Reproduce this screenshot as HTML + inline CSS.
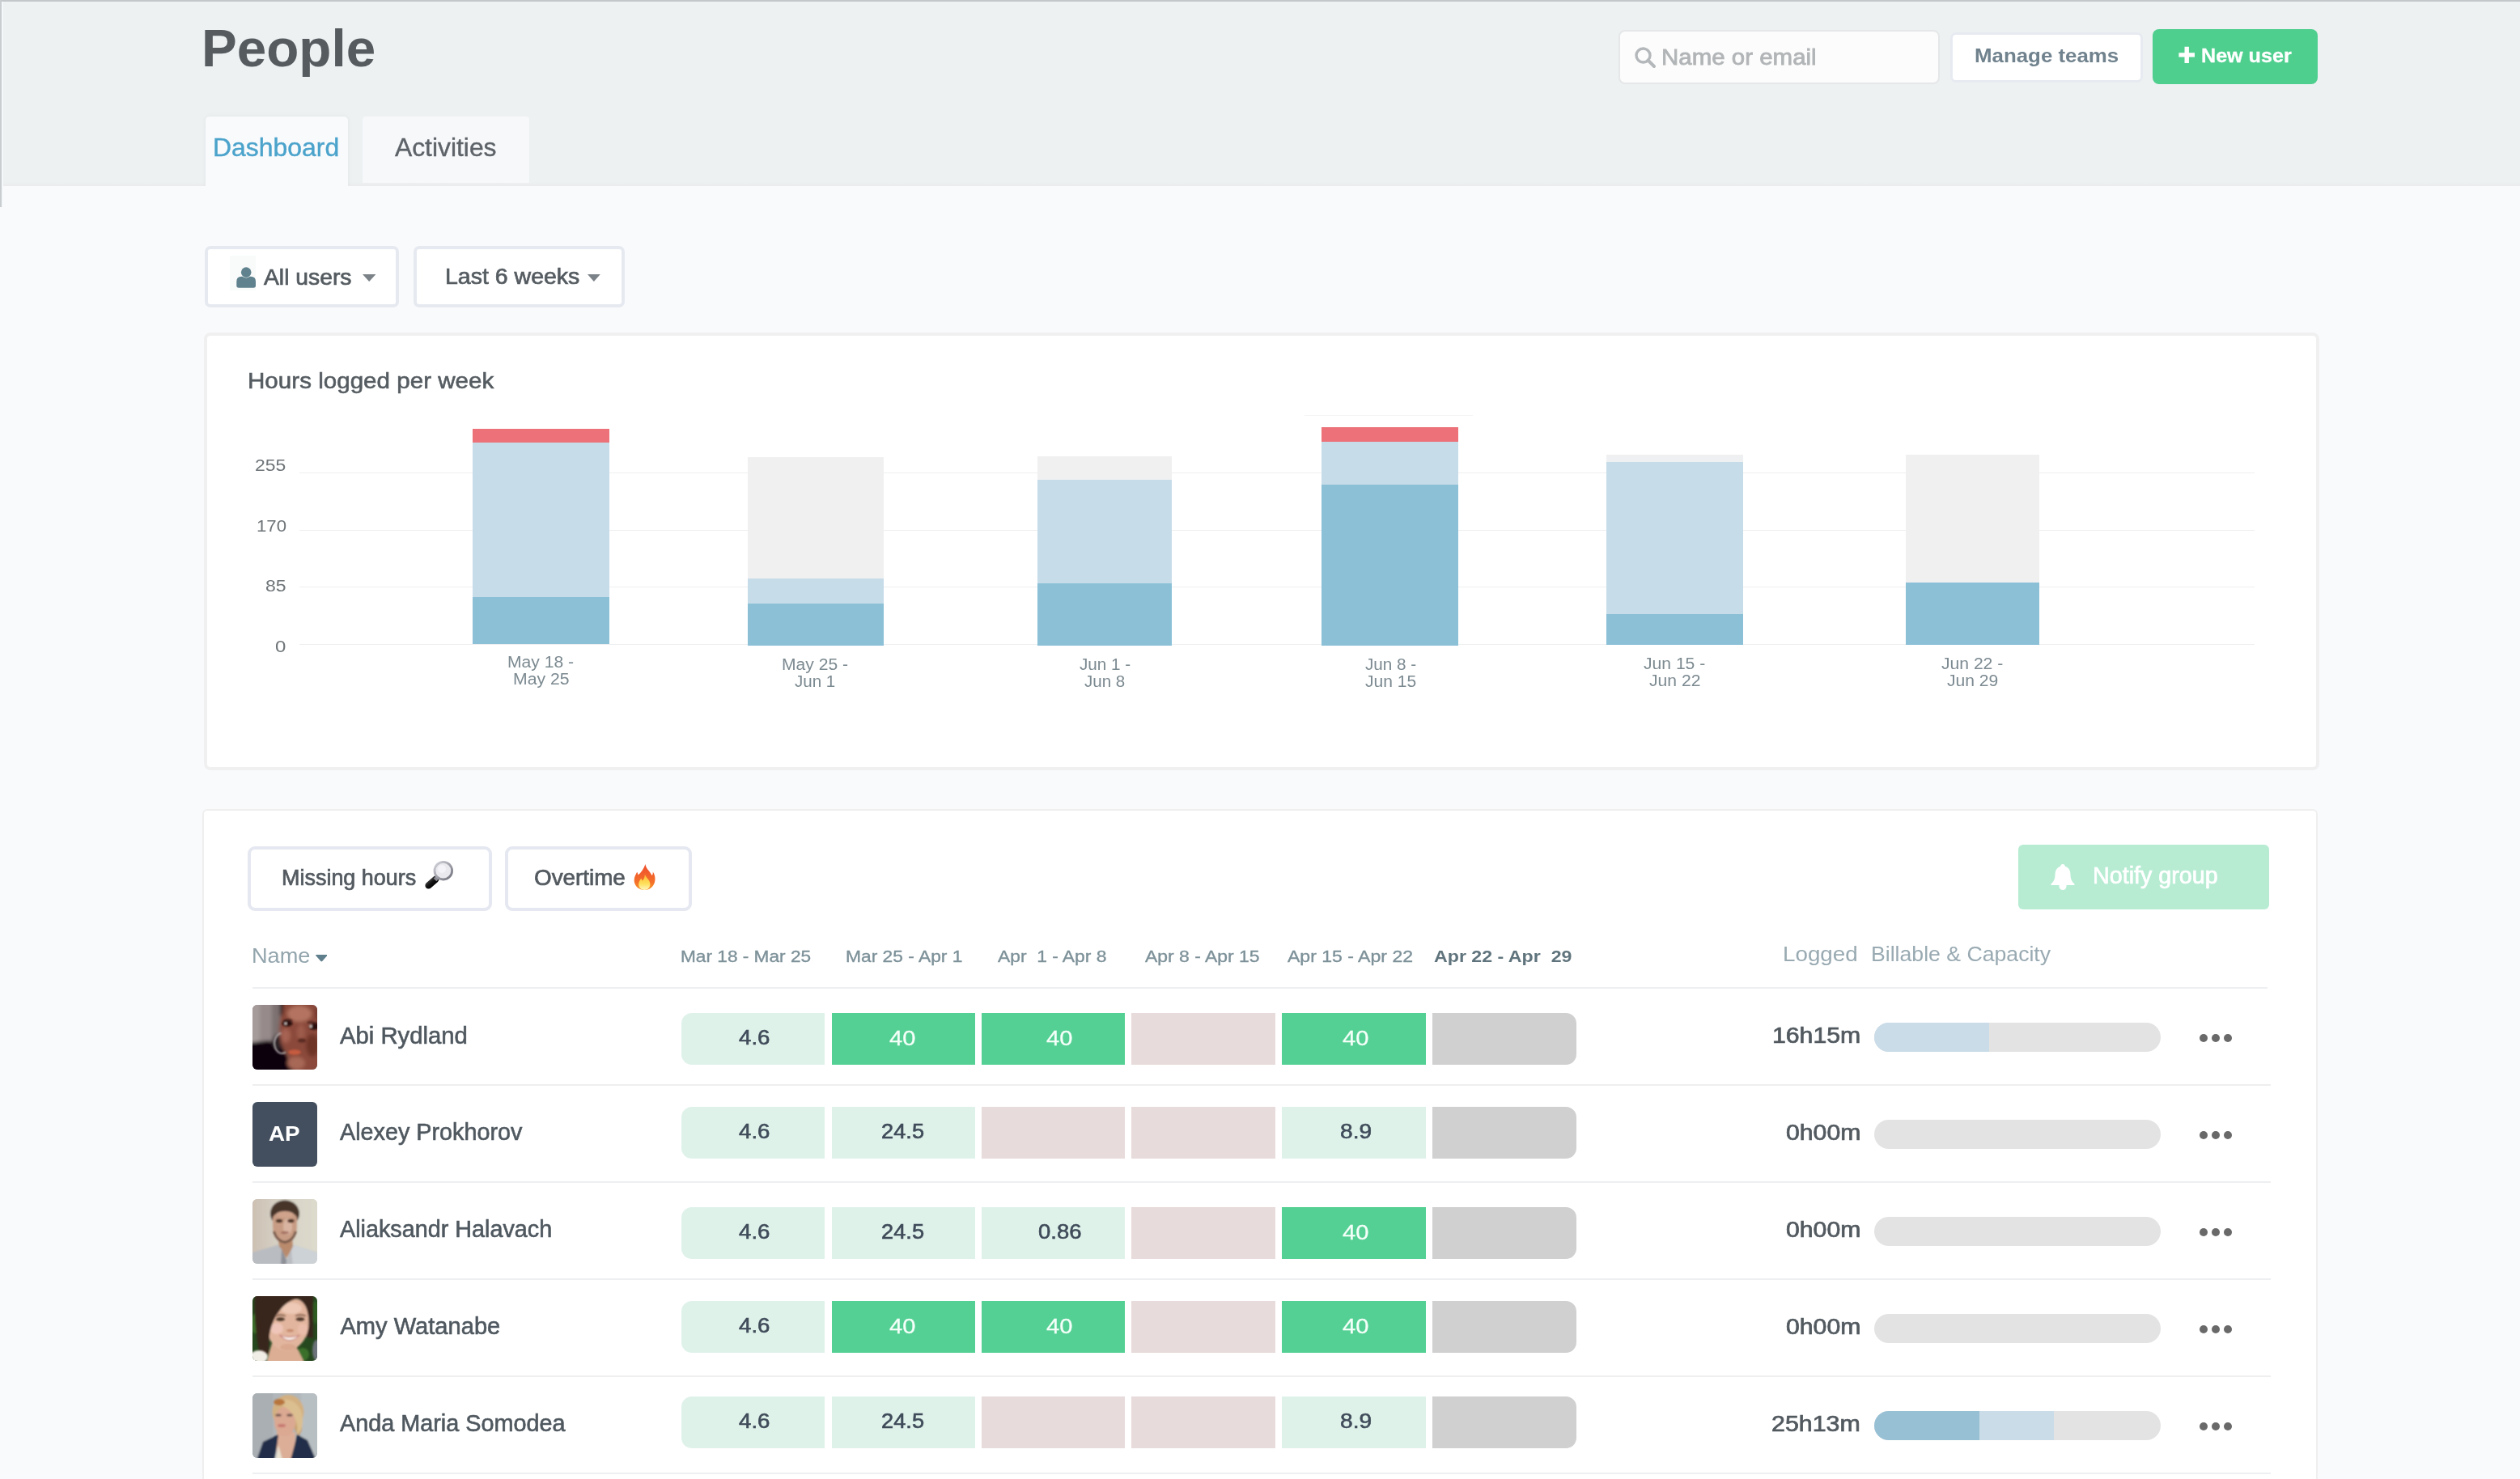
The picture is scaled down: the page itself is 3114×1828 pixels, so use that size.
<!DOCTYPE html>
<html><head><meta charset="utf-8"><title>People</title>
<style>
html,body{margin:0;padding:0;overflow:hidden;}
body{width:3114px;height:1828px;overflow:hidden;position:relative;background:#f9fafc;font-family:"Liberation Sans",sans-serif;}
body>div,body>span,body>svg{position:absolute;box-sizing:border-box;}
.t{white-space:pre;line-height:1;transform-origin:0 0;filter:blur(0.45px);}
</style></head><body>
<div style="left:0px;top:0px;width:3114px;height:230px;background:#edf1f2;"></div>
<div style="left:0px;top:225px;width:3114px;height:5px;background:linear-gradient(#edf1f2,#ebebed);"></div>
<div style="left:0px;top:0px;width:3114px;height:2px;background:#c3c7c9;"></div>
<div style="left:0px;top:0px;width:2px;height:256px;background:#c9cdd0;"></div>
<div style="left:2px;top:2px;width:2px;height:254px;background:#f4f8fa;"></div>
<span class="t" style="left:249.47px;top:28.25px;font-size:64.68px;color:#555b5f;font-weight:700;transform:scaleX(1.0145);">People</span>
<div style="left:253.6px;top:144px;width:176.7px;height:86.5px;background:#f9fafc;border-radius:5px 5px 0 0;box-shadow:0 0 6px rgba(0,0,0,0.05);"></div>
<div style="left:250px;top:230px;width:186px;height:8px;background:#f9fafc;"></div>
<div style="left:447.8px;top:144px;width:206px;height:82px;background:#f7f8fa;border-radius:4px 4px 1px 1px;"></div>
<span class="t" style="left:262.88px;top:166.93px;font-size:31.51px;color:#4ba3cb;transform:scaleX(1.0136);-webkit-text-stroke:0.4px #4ba3cb;">Dashboard</span>
<span class="t" style="left:488.44px;top:166.93px;font-size:31.51px;color:#5d6368;transform:scaleX(1.0096);-webkit-text-stroke:0.4px #5d6368;">Activities</span>
<div style="left:1999.5px;top:36.5px;width:397.5px;height:67px;background:#fcfcfc;border:2px solid #e5e7e8;border-radius:8px;"></div>
<svg style="left:2019px;top:57px" width="28" height="28" viewBox="0 0 28 28"><circle cx="11.5" cy="11.5" r="8.5" fill="none" stroke="#b4b8bb" stroke-width="3.4"/><path d="M17.5 17.5 L25 25" stroke="#b4b8bb" stroke-width="4" stroke-linecap="round"/></svg>
<span class="t" style="left:2052.61px;top:56.80px;font-size:27.41px;color:#b2b5b7;transform:scaleX(1.0755);-webkit-text-stroke:0.8px #b2b5b7;">Name or email</span>
<div style="left:2409.6px;top:40px;width:238px;height:62.2px;background:#ffffff;border:3px solid #e7ebf1;border-radius:7px;"></div>
<span class="t" style="left:2439.79px;top:56.83px;font-size:24.42px;color:#70828d;font-weight:700;transform:scaleX(1.0593);">Manage teams</span>
<div style="left:2660px;top:36px;width:204px;height:68px;background:#4ecf8e;border-radius:8px;"></div>
<svg style="left:2692px;top:57px" width="21" height="22" viewBox="0 0 21 22"><path d="M7.5 0.8 H12.9 V8.2 H20 V13.6 H12.9 V21 H7.5 V13.6 H0.4 V8.2 H7.5 Z" fill="#fff"/></svg>
<span class="t" style="left:2719.50px;top:57.62px;font-size:23.49px;color:#ffffff;font-weight:700;transform:scaleX(1.0695);-webkit-text-stroke:0.3px #ffffff;">New user</span>
<div style="left:252.8px;top:303.8px;width:240.4px;height:76.2px;background:#ffffff;border:4px solid #e6eaf0;border-radius:7px;"></div>
<div style="left:510.8px;top:303.8px;width:261px;height:76.2px;background:#ffffff;border:4px solid #e6eaf0;border-radius:7px;"></div>
<div style="left:284px;top:316px;width:32px;height:43px;background:#f9fafa;"></div>
<svg style="left:292px;top:330px" width="24" height="26" viewBox="0 0 24 26"><circle cx="12.2" cy="6.6" r="6.3" fill="#5f828e"/><path d="M0.3 23 V18 Q0.3 11.8 6.5 11.8 H7.5 Q12.2 15.2 16.9 11.8 H17.9 Q24 11.8 24 18 V23 Q24 25.8 21.2 25.8 H3.1 Q0.3 25.8 0.3 23 Z" fill="#5f828e"/></svg>
<span class="t" style="left:325.90px;top:328.57px;font-size:27.67px;color:#555c61;transform:scaleX(1.0229);-webkit-text-stroke:0.7px #555c61;">All users</span>
<svg style="left:447.8px;top:339.3px" width="16.4" height="9" viewBox="0 0 16.4 9"><path d="M0 0 H16.4 L8.2 9 Z" fill="#7b8388"/></svg>
<span class="t" style="left:550.22px;top:328.37px;font-size:27.67px;color:#555c61;transform:scaleX(1.0306);-webkit-text-stroke:0.7px #555c61;">Last 6 weeks</span>
<svg style="left:726.2px;top:339.3px" width="15.8" height="9" viewBox="0 0 15.8 9"><path d="M0 0 H15.8 L7.9 9 Z" fill="#7b8388"/></svg>
<div style="left:252.3px;top:411px;width:2613.6px;height:540.8px;background:#ffffff;border:4px solid #f0f0f1;border-radius:8px;"></div>
<span class="t" style="left:305.89px;top:455.98px;font-size:28.37px;color:#555c61;transform:scaleX(1.0434);-webkit-text-stroke:0.6px #555c61;">Hours logged per week</span>
<div style="left:369.5px;top:584px;width:2416px;height:1px;background:#eeeff1;"></div>
<div style="left:369.5px;top:655px;width:2416px;height:1px;background:#eeeff1;"></div>
<div style="left:369.5px;top:725px;width:2416px;height:1px;background:#eeeff1;"></div>
<div style="left:369.5px;top:796px;width:2416px;height:1px;background:#eeeff1;"></div>
<span class="t" style="left:315.35px;top:564.88px;font-size:20.93px;color:#6e7478;transform:scaleX(1.0967);">255</span>
<span class="t" style="left:316.51px;top:639.88px;font-size:20.93px;color:#6e7478;transform:scaleX(1.0607);">170</span>
<span class="t" style="left:328.01px;top:714.08px;font-size:20.93px;color:#6e7478;transform:scaleX(1.1015);">85</span>
<span class="t" style="left:340.26px;top:788.88px;font-size:20.93px;color:#6e7478;transform:scaleX(1.1471);">0</span>
<div style="left:1612px;top:513px;width:208px;height:1px;background:#f4f4f6;"></div>
<div style="left:584.3px;top:530.3px;width:168.3px;height:265.5px;background:#ec7178;"></div>
<div style="left:584.3px;top:547.3px;width:168.3px;height:248.5px;background:#c6dce9;"></div>
<div style="left:584.3px;top:738.3px;width:168.3px;height:57.5px;background:#8bc0d7;"></div>
<div style="left:924.4px;top:564.5px;width:167.3px;height:233.4px;background:#f0f0f0;"></div>
<div style="left:924.4px;top:714.5px;width:167.3px;height:83.4px;background:#c6dce9;"></div>
<div style="left:924.4px;top:746px;width:167.3px;height:51.9px;background:#8bc0d7;"></div>
<div style="left:1281.5px;top:564px;width:166.7px;height:233.9px;background:#f0f0f0;"></div>
<div style="left:1281.5px;top:593px;width:166.7px;height:204.9px;background:#c6dce9;"></div>
<div style="left:1281.5px;top:720.5px;width:166.7px;height:77.4px;background:#8bc0d7;"></div>
<div style="left:1633.3px;top:528.2px;width:169.1px;height:269.7px;background:#ec7178;"></div>
<div style="left:1633.3px;top:545.5px;width:169.1px;height:252.4px;background:#c6dce9;"></div>
<div style="left:1633.3px;top:598.5px;width:169.1px;height:199.4px;background:#8bc0d7;"></div>
<div style="left:1985px;top:562px;width:168.6px;height:234.7px;background:#eef0f2;"></div>
<div style="left:1985px;top:571px;width:168.6px;height:225.7px;background:#c6dce9;"></div>
<div style="left:1985px;top:758.6px;width:168.6px;height:38.1px;background:#8bc0d7;"></div>
<div style="left:2355.4px;top:562px;width:164.2px;height:234.7px;background:#f0f0f0;"></div>
<div style="left:2355.4px;top:720px;width:164.2px;height:76.7px;background:#8bc0d7;"></div>
<span class="t" style="left:627.32px;top:808.27px;font-size:20.35px;color:#7c8a91;transform:scaleX(1.0380);">May 18 -</span>
<span class="t" style="left:633.56px;top:829.47px;font-size:20.35px;color:#7c8a91;transform:scaleX(1.0433);">May 25</span>
<span class="t" style="left:965.52px;top:810.77px;font-size:20.35px;color:#7c8a91;transform:scaleX(1.0380);">May 25 -</span>
<span class="t" style="left:982.19px;top:831.77px;font-size:20.35px;color:#7c8a91;transform:scaleX(1.0105);">Jun 1</span>
<span class="t" style="left:1333.69px;top:811.27px;font-size:20.35px;color:#7c8a91;transform:scaleX(1.0163);">Jun 1 -</span>
<span class="t" style="left:1340.19px;top:832.27px;font-size:20.35px;color:#7c8a91;transform:scaleX(1.0084);">Jun 8</span>
<span class="t" style="left:1686.69px;top:811.27px;font-size:20.35px;color:#7c8a91;transform:scaleX(1.0163);">Jun 8 -</span>
<span class="t" style="left:1686.68px;top:832.27px;font-size:20.35px;color:#7c8a91;transform:scaleX(1.0342);">Jun 15</span>
<span class="t" style="left:2031.18px;top:809.77px;font-size:20.35px;color:#7c8a91;transform:scaleX(1.0371);">Jun 15 -</span>
<span class="t" style="left:2037.68px;top:830.77px;font-size:20.35px;color:#7c8a91;transform:scaleX(1.0374);">Jun 22</span>
<span class="t" style="left:2399.18px;top:809.77px;font-size:20.35px;color:#7c8a91;transform:scaleX(1.0371);">Jun 22 -</span>
<span class="t" style="left:2405.68px;top:830.77px;font-size:20.35px;color:#7c8a91;transform:scaleX(1.0363);">Jun 29</span>
<div style="left:250px;top:1000.2px;width:2614px;height:827.8px;background:#ffffff;border:2px solid #efeff0;border-bottom:0;border-radius:6px 6px 0 0;"></div>
<div style="left:305.8px;top:1046px;width:301.8px;height:80px;background:#ffffff;border:4px solid #e6e8f1;border-radius:9px;"></div>
<div style="left:624px;top:1046px;width:231.2px;height:80px;background:#ffffff;border:4px solid #e6e8f1;border-radius:9px;"></div>
<span class="t" style="left:347.74px;top:1070.54px;font-size:27.24px;color:#535a60;transform:scaleX(0.9896);-webkit-text-stroke:0.7px #535a60;">Missing hours</span>
<span class="t" style="left:659.85px;top:1070.54px;font-size:27.24px;color:#535a60;transform:scaleX(1.0212);-webkit-text-stroke:0.7px #535a60;">Overtime</span>
<svg style="left:524px;top:1063px" width="37" height="37" viewBox="0 0 37 37"><defs><linearGradient id="mg" x1="0" y1="0" x2="1" y2="1"><stop offset="0" stop-color="#d4d4dc"/><stop offset="1" stop-color="#70707c"/></linearGradient><linearGradient id="mh" x1="0" y1="0" x2="1" y2="1"><stop offset="0" stop-color="#4a4a4a"/><stop offset="0.5" stop-color="#111"/><stop offset="1" stop-color="#000"/></linearGradient></defs><path d="M5.6 31.4 L14.2 23.8" stroke="url(#mh)" stroke-width="8.4" stroke-linecap="round"/><path d="M13.6 24.4 L16.8 21.2" stroke="#8a8a92" stroke-width="5"/><circle cx="23.8" cy="13.2" r="10.8" fill="#e9e9ee" stroke="url(#mg)" stroke-width="2.8"/><circle cx="22" cy="11" r="5" fill="#f4f4f8"/></svg>
<svg style="left:783px;top:1068px" width="27" height="32" viewBox="0 0 27 32"><defs><linearGradient id="fo" x1="0" y1="0" x2="0" y2="1"><stop offset="0" stop-color="#ee4d2d"/><stop offset="0.7" stop-color="#f4702a"/><stop offset="1" stop-color="#f89a2a"/></linearGradient><linearGradient id="fi" x1="0" y1="0" x2="0" y2="1"><stop offset="0" stop-color="#fdb833"/><stop offset="0.6" stop-color="#ffe05a"/><stop offset="1" stop-color="#fff6c0"/></linearGradient></defs><path d="M14.5 0 C15 5.5 20 8.5 22.5 14 C23.8 12.8 24 11 23.6 9.6 C26.5 13 27.2 18.5 25.8 23 C24 28.8 19 32 13.2 32 C7 32 1.8 28 0.8 21.8 C0 16.5 2.8 12.8 4.2 9.8 C5 11 5.4 12.3 5.4 13.6 C8.8 10.8 12.6 6 14.5 0 Z" fill="url(#fo)"/><path d="M13.8 12.5 C15.2 17 20.4 19.5 20.4 25 C20.4 29.2 17.2 32 13.4 32 C9.6 32 6.2 29.2 6.2 25 C6.2 21.6 8.2 19.8 9.2 17.6 C9.8 19 10.4 20 11 20.6 C12.8 18.4 14 15.6 13.8 12.5 Z" fill="url(#fi)"/></svg>
<div style="left:2494.3px;top:1044.3px;width:309.5px;height:79.4px;background:#b7ecd3;border-radius:6px;"></div>
<svg style="left:2534px;top:1068px" width="30" height="32" viewBox="0 0 30 32"><path d="M15 0 C16.7 0 17.8 1.2 17.8 2.8 C22.5 4.2 24.5 8.3 24.5 13 C24.5 19 26.5 22 29.5 24.5 V26 H0.5 V24.5 C3.5 22 5.5 19 5.5 13 C5.5 8.3 7.5 4.2 12.2 2.8 C12.2 1.2 13.3 0 15 0 Z" fill="#fff"/><path d="M10.5 25.5 H19.5 V27.5 C19.5 30 17.5 32 15 32 C12.5 32 10.5 30 10.5 27.5 Z" fill="#fff"/></svg>
<span class="t" style="left:2586.00px;top:1068.21px;font-size:28.69px;color:#ffffff;-webkit-text-stroke:0.7px #ffffff;">Notify group</span>
<span class="t" style="left:310.67px;top:1167.88px;font-size:26.02px;color:#93a5ad;transform:scaleX(1.0437);">Name</span>
<svg style="left:389.9px;top:1180.4px" width="14.6" height="8.6" viewBox="0 0 14.6 8.6"><path d="M1 0 H13.6 Q15.2 0.3 14 1.6 L8.2 8 Q7.3 8.9 6.4 8 L0.6 1.6 Q-0.6 0.3 1 0 Z" fill="#607f8c"/></svg>
<span class="t" style="left:841.43px;top:1171.80px;font-size:20.67px;color:#7d9199;transform:scaleX(1.0965);-webkit-text-stroke:0.35px #7d9199;">Mar 18 - Mar 25</span>
<span class="t" style="left:1045.42px;top:1171.80px;font-size:20.67px;color:#7d9199;transform:scaleX(1.1040);-webkit-text-stroke:0.35px #7d9199;">Mar 25 - Apr 1</span>
<span class="t" style="left:1232.55px;top:1171.80px;font-size:20.67px;color:#7d9199;transform:scaleX(1.1042);-webkit-text-stroke:0.35px #7d9199;">Apr  1 - Apr 8</span>
<span class="t" style="left:1415.15px;top:1171.80px;font-size:20.67px;color:#7d9199;transform:scaleX(1.1104);-webkit-text-stroke:0.35px #7d9199;">Apr 8 - Apr 15</span>
<span class="t" style="left:1591.35px;top:1171.80px;font-size:20.67px;color:#7d9199;transform:scaleX(1.1158);-webkit-text-stroke:0.35px #7d9199;">Apr 15 - Apr 22</span>
<span class="t" style="left:1772.34px;top:1171.46px;font-size:21.08px;color:#60747d;font-weight:700;transform:scaleX(1.0994);">Apr 22 - Apr  29</span>
<span class="t" style="left:2203.12px;top:1165.65px;font-size:26.16px;color:#99aab2;transform:scaleX(1.0613);">Logged</span>
<span class="t" style="left:2311.92px;top:1165.65px;font-size:26.16px;color:#99aab2;transform:scaleX(1.0184);">Billable &amp; Capacity</span>
<div style="left:312px;top:1220px;width:2490px;height:2px;background:#eeeff0;"></div>
<svg style="left:312px;top:1242px" width="80" height="80" viewBox="0 0 80 80"><defs><clipPath id="c0"><rect x="0" y="0" width="80" height="80" rx="6" ry="6"/></clipPath><filter id="b0" x="-10%" y="-10%" width="120%" height="120%"><feGaussianBlur stdDeviation="2.2"/></filter><filter id="t0" x="-10%" y="-10%" width="120%" height="120%"><feGaussianBlur stdDeviation="0.8"/></filter></defs><g clip-path="url(#c0)"><rect width="80" height="80" fill="#8e8283"/><g filter="url(#b0)">
<rect x="-5" y="-5" width="45" height="55" fill="#968a8b"/>
<rect x="-5" y="-5" width="14" height="55" fill="#a69b9b"/>
<rect x="24" y="-5" width="16" height="55" fill="#7d7171"/>
<path d="M-5 47 L20 44 L36 50 L54 86 L-5 86 Z" fill="#0a0507"/>
<ellipse cx="32" cy="46" rx="8" ry="9" fill="#2b2225"/>
<path d="M35 -5 L86 -5 L86 86 L52 86 L44 64 L35 48 L33 30 L35 10 Z" fill="#8a4a3b"/>
<path d="M34 -5 L39 -5 L37 12 L34 14 Z" fill="#2a1512"/>
<ellipse cx="58" cy="11" rx="15" ry="10" fill="#b37361"/>
<ellipse cx="41" cy="38" rx="6" ry="9" fill="#a66252"/>
<ellipse cx="54" cy="72" rx="11" ry="8" fill="#a86757"/>
<ellipse cx="60" cy="34" rx="5" ry="10" fill="#9d5c4c"/>
<ellipse cx="74" cy="50" rx="8" ry="14" fill="#6e3428"/>
<ellipse cx="86" cy="10" rx="8" ry="14" fill="#6e3428"/>
</g><g filter="url(#t0)">
<path d="M35.5 35 A9.5 12.5 0 1 0 41 58.5" fill="none" stroke="#c9c5c5" stroke-width="1.7"/>
<ellipse cx="43" cy="23" rx="6.5" ry="3.6" fill="#2a100d"/>
<ellipse cx="76" cy="27" rx="6.5" ry="3.8" fill="#2a100d"/>
<circle cx="41" cy="23" r="1.5" fill="#e8dcd8"/><circle cx="72" cy="26.5" r="1.7" fill="#d8ccc8"/>
<ellipse cx="61" cy="44" rx="5" ry="2.6" fill="#5a2a20"/>
<ellipse cx="52" cy="58.5" rx="8" ry="3.2" fill="#c65b41"/>
<path d="M38 20 Q43 17 49 19.5" fill="none" stroke="#3a1a14" stroke-width="1.6"/>
<path d="M68 22 Q75 20 82 24" fill="none" stroke="#3a1a14" stroke-width="1.6"/>
</g></g></svg>
<span class="t" style="left:420.44px;top:1266.17px;font-size:29.10px;color:#4f585f;transform:scaleX(1.0059);-webkit-text-stroke:0.6px #4f585f;">Abi Rydland</span>
<div style="left:841.9px;top:1252.2px;width:177.5px;height:63.5px;background:#dff2ea;border-radius:13px 0 0 13px;"></div>
<span class="t" style="left:912.56px;top:1269.97px;font-size:25.90px;color:#3f4b59;transform:scaleX(1.0682);-webkit-text-stroke:0.6px #3f4b59;">4.6</span>
<div style="left:1027.6px;top:1252.2px;width:177.4px;height:63.5px;background:#55d094;"></div>
<span class="t" style="left:1099.23px;top:1269.68px;font-size:26.25px;color:#f4fff9;transform:scaleX(1.1105);-webkit-text-stroke:0.3px #f4fff9;">40</span>
<div style="left:1213.2px;top:1252.2px;width:177.2px;height:63.5px;background:#55d094;"></div>
<span class="t" style="left:1293.23px;top:1269.68px;font-size:26.25px;color:#f4fff9;transform:scaleX(1.1105);-webkit-text-stroke:0.3px #f4fff9;">40</span>
<div style="left:1398.3px;top:1252.2px;width:177.5px;height:63.5px;background:#e8dbdb;"></div>
<div style="left:1584px;top:1252.2px;width:178px;height:63.5px;background:#55d094;"></div>
<span class="t" style="left:1659.43px;top:1269.68px;font-size:26.25px;color:#f4fff9;transform:scaleX(1.1105);-webkit-text-stroke:0.3px #f4fff9;">40</span>
<div style="left:1770px;top:1252.2px;width:177.8px;height:63.5px;background:#d0d0d0;border-radius:0 13px 13px 0;"></div>
<span class="t" style="left:2189.70px;top:1267.11px;font-size:26.80px;color:#525a60;transform:scaleX(1.1281);-webkit-text-stroke:0.7px #525a60;">16h15m</span>
<div style="left:2316px;top:1264px;width:354px;height:36px;background:#e3e3e3;border-radius:18px;overflow:hidden;"><div style="position:absolute;left:0px;top:0;width:142.2px;height:100%;background:#c9dce8"></div></div>
<div style="left:2717.5px;top:1277.5px;width:10px;height:10px;background:#696969;border-radius:50%;"></div>
<div style="left:2732.8px;top:1277.5px;width:10px;height:10px;background:#696969;border-radius:50%;"></div>
<div style="left:2748.1px;top:1277.5px;width:10px;height:10px;background:#696969;border-radius:50%;"></div>
<div style="left:312px;top:1340px;width:2493.5px;height:2px;background:#eeeff0;"></div>
<svg style="left:312px;top:1362px" width="80" height="80" viewBox="0 0 80 80"><defs><clipPath id="c1"><rect x="0" y="0" width="80" height="80" rx="6" ry="6"/></clipPath><filter id="b1" x="-10%" y="-10%" width="120%" height="120%"><feGaussianBlur stdDeviation="0"/></filter><filter id="t1" x="-10%" y="-10%" width="120%" height="120%"><feGaussianBlur stdDeviation="0.8"/></filter></defs><g clip-path="url(#c1)"><rect width="80" height="80" fill="#434f5e"/><g filter="url(#b1)"></g></g></svg>
<span class="t" style="left:332.33px;top:1387.85px;font-size:26.16px;color:#ffffff;font-weight:700;transform:scaleX(1.0625);">AP</span>
<span class="t" style="left:420.44px;top:1385.27px;font-size:29.10px;color:#4f585f;transform:scaleX(0.9882);-webkit-text-stroke:0.6px #4f585f;">Alexey Prokhorov</span>
<div style="left:841.9px;top:1368px;width:177.5px;height:63.5px;background:#dff2ea;border-radius:13px 0 0 13px;"></div>
<span class="t" style="left:912.56px;top:1385.77px;font-size:25.90px;color:#3f4b59;transform:scaleX(1.0682);-webkit-text-stroke:0.6px #3f4b59;">4.6</span>
<div style="left:1027.6px;top:1368px;width:177.4px;height:63.5px;background:#dff2ea;"></div>
<span class="t" style="left:1088.55px;top:1385.77px;font-size:25.90px;color:#3f4b59;transform:scaleX(1.0525);-webkit-text-stroke:0.6px #3f4b59;">24.5</span>
<div style="left:1213.2px;top:1368px;width:177.2px;height:63.5px;background:#e8dbdb;"></div>
<div style="left:1398.3px;top:1368px;width:177.5px;height:63.5px;background:#e8dbdb;"></div>
<div style="left:1584px;top:1368px;width:178px;height:63.5px;background:#dff2ea;"></div>
<span class="t" style="left:1655.92px;top:1385.77px;font-size:25.90px;color:#3f4b59;transform:scaleX(1.0854);-webkit-text-stroke:0.6px #3f4b59;">8.9</span>
<div style="left:1770px;top:1368px;width:177.8px;height:63.5px;background:#d0d0d0;border-radius:0 13px 13px 0;"></div>
<span class="t" style="left:2206.62px;top:1387.11px;font-size:26.80px;color:#525a60;transform:scaleX(1.1268);-webkit-text-stroke:0.7px #525a60;">0h00m</span>
<div style="left:2316px;top:1384px;width:354px;height:36px;background:#e3e3e3;border-radius:18px;overflow:hidden;"></div>
<div style="left:2717.5px;top:1397.5px;width:10px;height:10px;background:#696969;border-radius:50%;"></div>
<div style="left:2732.8px;top:1397.5px;width:10px;height:10px;background:#696969;border-radius:50%;"></div>
<div style="left:2748.1px;top:1397.5px;width:10px;height:10px;background:#696969;border-radius:50%;"></div>
<div style="left:312px;top:1460px;width:2493.5px;height:2px;background:#eeeff0;"></div>
<svg style="left:312px;top:1482px" width="80" height="80" viewBox="0 0 80 80"><defs><clipPath id="c2"><rect x="0" y="0" width="80" height="80" rx="6" ry="6"/></clipPath><filter id="b2" x="-10%" y="-10%" width="120%" height="120%"><feGaussianBlur stdDeviation="1.1"/></filter><filter id="t2" x="-10%" y="-10%" width="120%" height="120%"><feGaussianBlur stdDeviation="0.8"/></filter></defs><g clip-path="url(#c2)"><rect width="80" height="80" fill="#d6d2c5"/><g filter="url(#b2)">
<defs><linearGradient id="g2" x1="0" y1="0" x2="1" y2="0"><stop offset="0" stop-color="#cbbdb1"/><stop offset="0.45" stop-color="#d7d3c6"/><stop offset="1" stop-color="#dddbcd"/></linearGradient></defs>
<rect x="-5" y="-5" width="90" height="90" fill="url(#g2)"/>
<path d="M31 44 L49 44 L50 60 L42 73 L33 60 Z" fill="#b98a6c"/>
<path d="M-5 68 C8 63 22 60 31 56.5 L36 62 L42 75 L48 62 L51 56.5 C60 60 72 63 86 68 L86 86 L-5 86 Z" fill="#b9bcc1"/>
<path d="M51 56.5 C60 60 72 63 86 68 L86 86 L50 86 L48 64 Z" fill="#cdd2d7"/>
<path d="M36 62 L42 75 L41 86 L35 86 Z" fill="#8d9097"/>
<ellipse cx="40" cy="18" rx="18" ry="16.5" fill="#46352b"/>
<path d="M25 24 C25 13.5 55 13.5 55 24 L55 36 C54 46 48 53.5 40 54 C32 53.5 26 46 25 36 Z" fill="#c89c84"/>
<ellipse cx="43.5" cy="34" rx="5.5" ry="10" fill="#d9b5a1"/>
<ellipse cx="40" cy="19" rx="11" ry="4" fill="#d0a48c"/>
</g><g filter="url(#t2)">
<path d="M26.5 40 Q30 52 40 53.5 Q50 52 53.5 40" fill="none" stroke="#574033" stroke-width="2.6" opacity="0.8"/>
<ellipse cx="33" cy="27" rx="4" ry="1.9" fill="#4a3328"/><ellipse cx="47.5" cy="27" rx="4" ry="1.9" fill="#4a3328"/>
<ellipse cx="40" cy="41.5" rx="5" ry="1.3" fill="#9c6558"/>
</g></g></svg>
<span class="t" style="left:420.44px;top:1505.27px;font-size:29.10px;color:#4f585f;transform:scaleX(0.9888);-webkit-text-stroke:0.6px #4f585f;">Aliaksandr Halavach</span>
<div style="left:841.9px;top:1492.1px;width:177.5px;height:63.5px;background:#dff2ea;border-radius:13px 0 0 13px;"></div>
<span class="t" style="left:912.56px;top:1509.87px;font-size:25.90px;color:#3f4b59;transform:scaleX(1.0682);-webkit-text-stroke:0.6px #3f4b59;">4.6</span>
<div style="left:1027.6px;top:1492.1px;width:177.4px;height:63.5px;background:#dff2ea;"></div>
<span class="t" style="left:1088.55px;top:1509.87px;font-size:25.90px;color:#3f4b59;transform:scaleX(1.0525);-webkit-text-stroke:0.6px #3f4b59;">24.5</span>
<div style="left:1213.2px;top:1492.1px;width:177.2px;height:63.5px;background:#dff2ea;"></div>
<span class="t" style="left:1282.55px;top:1509.87px;font-size:25.90px;color:#3f4b59;transform:scaleX(1.0597);-webkit-text-stroke:0.6px #3f4b59;">0.86</span>
<div style="left:1398.3px;top:1492.1px;width:177.5px;height:63.5px;background:#e8dbdb;"></div>
<div style="left:1584px;top:1492.1px;width:178px;height:63.5px;background:#55d094;"></div>
<span class="t" style="left:1659.43px;top:1509.58px;font-size:26.25px;color:#f4fff9;transform:scaleX(1.1105);-webkit-text-stroke:0.3px #f4fff9;">40</span>
<div style="left:1770px;top:1492.1px;width:177.8px;height:63.5px;background:#d0d0d0;border-radius:0 13px 13px 0;"></div>
<span class="t" style="left:2206.62px;top:1507.11px;font-size:26.80px;color:#525a60;transform:scaleX(1.1268);-webkit-text-stroke:0.7px #525a60;">0h00m</span>
<div style="left:2316px;top:1504px;width:354px;height:36px;background:#e3e3e3;border-radius:18px;overflow:hidden;"></div>
<div style="left:2717.5px;top:1517.5px;width:10px;height:10px;background:#696969;border-radius:50%;"></div>
<div style="left:2732.8px;top:1517.5px;width:10px;height:10px;background:#696969;border-radius:50%;"></div>
<div style="left:2748.1px;top:1517.5px;width:10px;height:10px;background:#696969;border-radius:50%;"></div>
<div style="left:312px;top:1580px;width:2493.5px;height:2px;background:#eeeff0;"></div>
<svg style="left:312px;top:1602px" width="80" height="80" viewBox="0 0 80 80"><defs><clipPath id="c3"><rect x="0" y="0" width="80" height="80" rx="6" ry="6"/></clipPath><filter id="b3" x="-10%" y="-10%" width="120%" height="120%"><feGaussianBlur stdDeviation="1.1"/></filter><filter id="t3" x="-10%" y="-10%" width="120%" height="120%"><feGaussianBlur stdDeviation="0.8"/></filter></defs><g clip-path="url(#c3)"><rect width="80" height="80" fill="#26481f"/><g filter="url(#b3)">
<ellipse cx="3" cy="34" rx="5" ry="12" fill="#3b6e2c"/>
<ellipse cx="78" cy="20" rx="4" ry="14" fill="#2f5d24"/>
<ellipse cx="62" cy="72" rx="8" ry="8" fill="#3a7029"/>
<path d="M16 86 L24 58 L54 62 L66 86 Z" fill="#dcae94"/>
<path d="M40 -5 L75 -5 L75 52 L64 50 L56 -2 Z" fill="#38271f"/>
<path d="M19 44 C19 20 34 3 50 3 C63 3 69.5 14 69.5 34 C69.5 50 60 62 48 67.5 C36 70 21 62 19 44 Z" fill="#e2b69e"/>
<ellipse cx="48" cy="15" rx="13" ry="7" fill="#edc9b6"/>
<ellipse cx="30" cy="40" rx="8" ry="7" fill="#eec5b8"/><ellipse cx="62" cy="41" rx="6" ry="7" fill="#eabdab"/>
<ellipse cx="44" cy="63" rx="10" ry="4" fill="#d9a88e"/>
<path d="M3 -5 L73 -5 L68 6 C58 0 45 4 35 16 C27 26 23 36 21 48 L20 72 L9 72 C3 44 2 18 3 -5 Z" fill="#38271f"/>
<path d="M65 3 L73 -5 L75 52 L69.5 48 C71 36 70.5 18 65 3 Z" fill="#38271f"/>
</g><g filter="url(#t3)">
<ellipse cx="34.5" cy="28.5" rx="5.5" ry="2.2" fill="#4a3428"/><ellipse cx="59" cy="28.5" rx="5.5" ry="2.2" fill="#4a3428"/>
<path d="M28 24.5 Q34 22 41 24.5" fill="none" stroke="#6a4a3a" stroke-width="1.3"/><path d="M53 24.5 Q59 22 66 24.5" fill="none" stroke="#6a4a3a" stroke-width="1.3"/>
<ellipse cx="46.5" cy="42.5" rx="4.5" ry="1.8" fill="#c48a6e"/>
<path d="M32.5 47.5 Q45.5 63 59 47.5 Q45.5 52.5 32.5 47.5 Z" fill="#c27474"/>
<path d="M36 49.5 Q45.5 58.5 56 49.5 Q45.5 53 36 49.5 Z" fill="#fdfaf4"/>
<ellipse cx="8" cy="75" rx="11" ry="8" fill="#f1ede7"/>
<ellipse cx="79.5" cy="67" rx="5.5" ry="13" fill="#6c737a"/>
</g></g></svg>
<span class="t" style="left:420.44px;top:1625.27px;font-size:29.10px;color:#4f585f;-webkit-text-stroke:0.6px #4f585f;">Amy Watanabe</span>
<div style="left:841.9px;top:1608.3px;width:177.5px;height:63.5px;background:#dff2ea;border-radius:13px 0 0 13px;"></div>
<span class="t" style="left:912.56px;top:1626.07px;font-size:25.90px;color:#3f4b59;transform:scaleX(1.0682);-webkit-text-stroke:0.6px #3f4b59;">4.6</span>
<div style="left:1027.6px;top:1608.3px;width:177.4px;height:63.5px;background:#55d094;"></div>
<span class="t" style="left:1099.23px;top:1625.78px;font-size:26.25px;color:#f4fff9;transform:scaleX(1.1105);-webkit-text-stroke:0.3px #f4fff9;">40</span>
<div style="left:1213.2px;top:1608.3px;width:177.2px;height:63.5px;background:#55d094;"></div>
<span class="t" style="left:1293.23px;top:1625.78px;font-size:26.25px;color:#f4fff9;transform:scaleX(1.1105);-webkit-text-stroke:0.3px #f4fff9;">40</span>
<div style="left:1398.3px;top:1608.3px;width:177.5px;height:63.5px;background:#e8dbdb;"></div>
<div style="left:1584px;top:1608.3px;width:178px;height:63.5px;background:#55d094;"></div>
<span class="t" style="left:1659.43px;top:1625.78px;font-size:26.25px;color:#f4fff9;transform:scaleX(1.1105);-webkit-text-stroke:0.3px #f4fff9;">40</span>
<div style="left:1770px;top:1608.3px;width:177.8px;height:63.5px;background:#d0d0d0;border-radius:0 13px 13px 0;"></div>
<span class="t" style="left:2206.62px;top:1627.11px;font-size:26.80px;color:#525a60;transform:scaleX(1.1268);-webkit-text-stroke:0.7px #525a60;">0h00m</span>
<div style="left:2316px;top:1624px;width:354px;height:36px;background:#e3e3e3;border-radius:18px;overflow:hidden;"></div>
<div style="left:2717.5px;top:1637.5px;width:10px;height:10px;background:#696969;border-radius:50%;"></div>
<div style="left:2732.8px;top:1637.5px;width:10px;height:10px;background:#696969;border-radius:50%;"></div>
<div style="left:2748.1px;top:1637.5px;width:10px;height:10px;background:#696969;border-radius:50%;"></div>
<div style="left:312px;top:1700px;width:2493.5px;height:2px;background:#eeeff0;"></div>
<svg style="left:312px;top:1722px" width="80" height="80" viewBox="0 0 80 80"><defs><clipPath id="c4"><rect x="0" y="0" width="80" height="80" rx="6" ry="6"/></clipPath><filter id="b4" x="-10%" y="-10%" width="120%" height="120%"><feGaussianBlur stdDeviation="1.1"/></filter><filter id="t4" x="-10%" y="-10%" width="120%" height="120%"><feGaussianBlur stdDeviation="0.8"/></filter></defs><g clip-path="url(#c4)"><rect width="80" height="80" fill="#b0b6ba"/><g filter="url(#b4)">
<rect x="-5" y="-5" width="30" height="90" fill="#a9afb3"/>
<rect x="60" y="-5" width="30" height="90" fill="#b8bfc3"/>
<path d="M30 48 L53 48 L52 86 L30 86 Z" fill="#dcae98"/>
<ellipse cx="44" cy="23" rx="19.5" ry="21" fill="#d3b081"/>
<path d="M56 30 C64 38 62 50 56 52 L52 44 Z" fill="#c9a06c"/>
<ellipse cx="40" cy="35" rx="13" ry="18" fill="#dba892"/>
<path d="M36 8 C50 6 62 16 62 34 C62 44 58 50 55 50 C57 36 52 22 36 15 Z" fill="#dcbf90"/>
<ellipse cx="33" cy="11" rx="7" ry="4" fill="#b7743e"/>
<ellipse cx="32" cy="27" rx="3.8" ry="1.6" fill="#6a5048"/><ellipse cx="46" cy="27" rx="3.8" ry="1.6" fill="#6a5048"/>
<ellipse cx="36" cy="40" rx="5" ry="1.9" fill="#c6766f"/>
<path d="M4 86 L13 60 L32 51 L30 66 L26 86 Z" fill="#222e49"/>
<path d="M46 86 L52 64 L55 51 L68 58 L80 86 Z" fill="#222e49"/>
<path d="M28 86 L32 64 L38 86 Z" fill="#e9e2d2"/>
</g></g></svg>
<span class="t" style="left:420.44px;top:1745.27px;font-size:29.10px;color:#4f585f;transform:scaleX(0.9900);-webkit-text-stroke:0.6px #4f585f;">Anda Maria Somodea</span>
<div style="left:841.9px;top:1726.1px;width:177.5px;height:63.5px;background:#dff2ea;border-radius:13px 0 0 13px;"></div>
<span class="t" style="left:912.56px;top:1743.87px;font-size:25.90px;color:#3f4b59;transform:scaleX(1.0682);-webkit-text-stroke:0.6px #3f4b59;">4.6</span>
<div style="left:1027.6px;top:1726.1px;width:177.4px;height:63.5px;background:#dff2ea;"></div>
<span class="t" style="left:1088.55px;top:1743.87px;font-size:25.90px;color:#3f4b59;transform:scaleX(1.0525);-webkit-text-stroke:0.6px #3f4b59;">24.5</span>
<div style="left:1213.2px;top:1726.1px;width:177.2px;height:63.5px;background:#e8dbdb;"></div>
<div style="left:1398.3px;top:1726.1px;width:177.5px;height:63.5px;background:#e8dbdb;"></div>
<div style="left:1584px;top:1726.1px;width:178px;height:63.5px;background:#dff2ea;"></div>
<span class="t" style="left:1655.92px;top:1743.87px;font-size:25.90px;color:#3f4b59;transform:scaleX(1.0854);-webkit-text-stroke:0.6px #3f4b59;">8.9</span>
<div style="left:1770px;top:1726.1px;width:177.8px;height:63.5px;background:#d0d0d0;border-radius:0 13px 13px 0;"></div>
<span class="t" style="left:2189.28px;top:1747.11px;font-size:26.80px;color:#525a60;transform:scaleX(1.1325);-webkit-text-stroke:0.7px #525a60;">25h13m</span>
<div style="left:2316px;top:1744px;width:354px;height:36px;background:#e3e3e3;border-radius:18px;overflow:hidden;"><div style="position:absolute;left:0px;top:0;width:130px;height:100%;background:#98c0d5"></div><div style="position:absolute;left:130px;top:0;width:92px;height:100%;background:#c9dce8"></div></div>
<div style="left:2717.5px;top:1757.5px;width:10px;height:10px;background:#696969;border-radius:50%;"></div>
<div style="left:2732.8px;top:1757.5px;width:10px;height:10px;background:#696969;border-radius:50%;"></div>
<div style="left:2748.1px;top:1757.5px;width:10px;height:10px;background:#696969;border-radius:50%;"></div>
<div style="left:312px;top:1820px;width:2493.5px;height:2px;background:#eeeff0;"></div>
</body></html>
